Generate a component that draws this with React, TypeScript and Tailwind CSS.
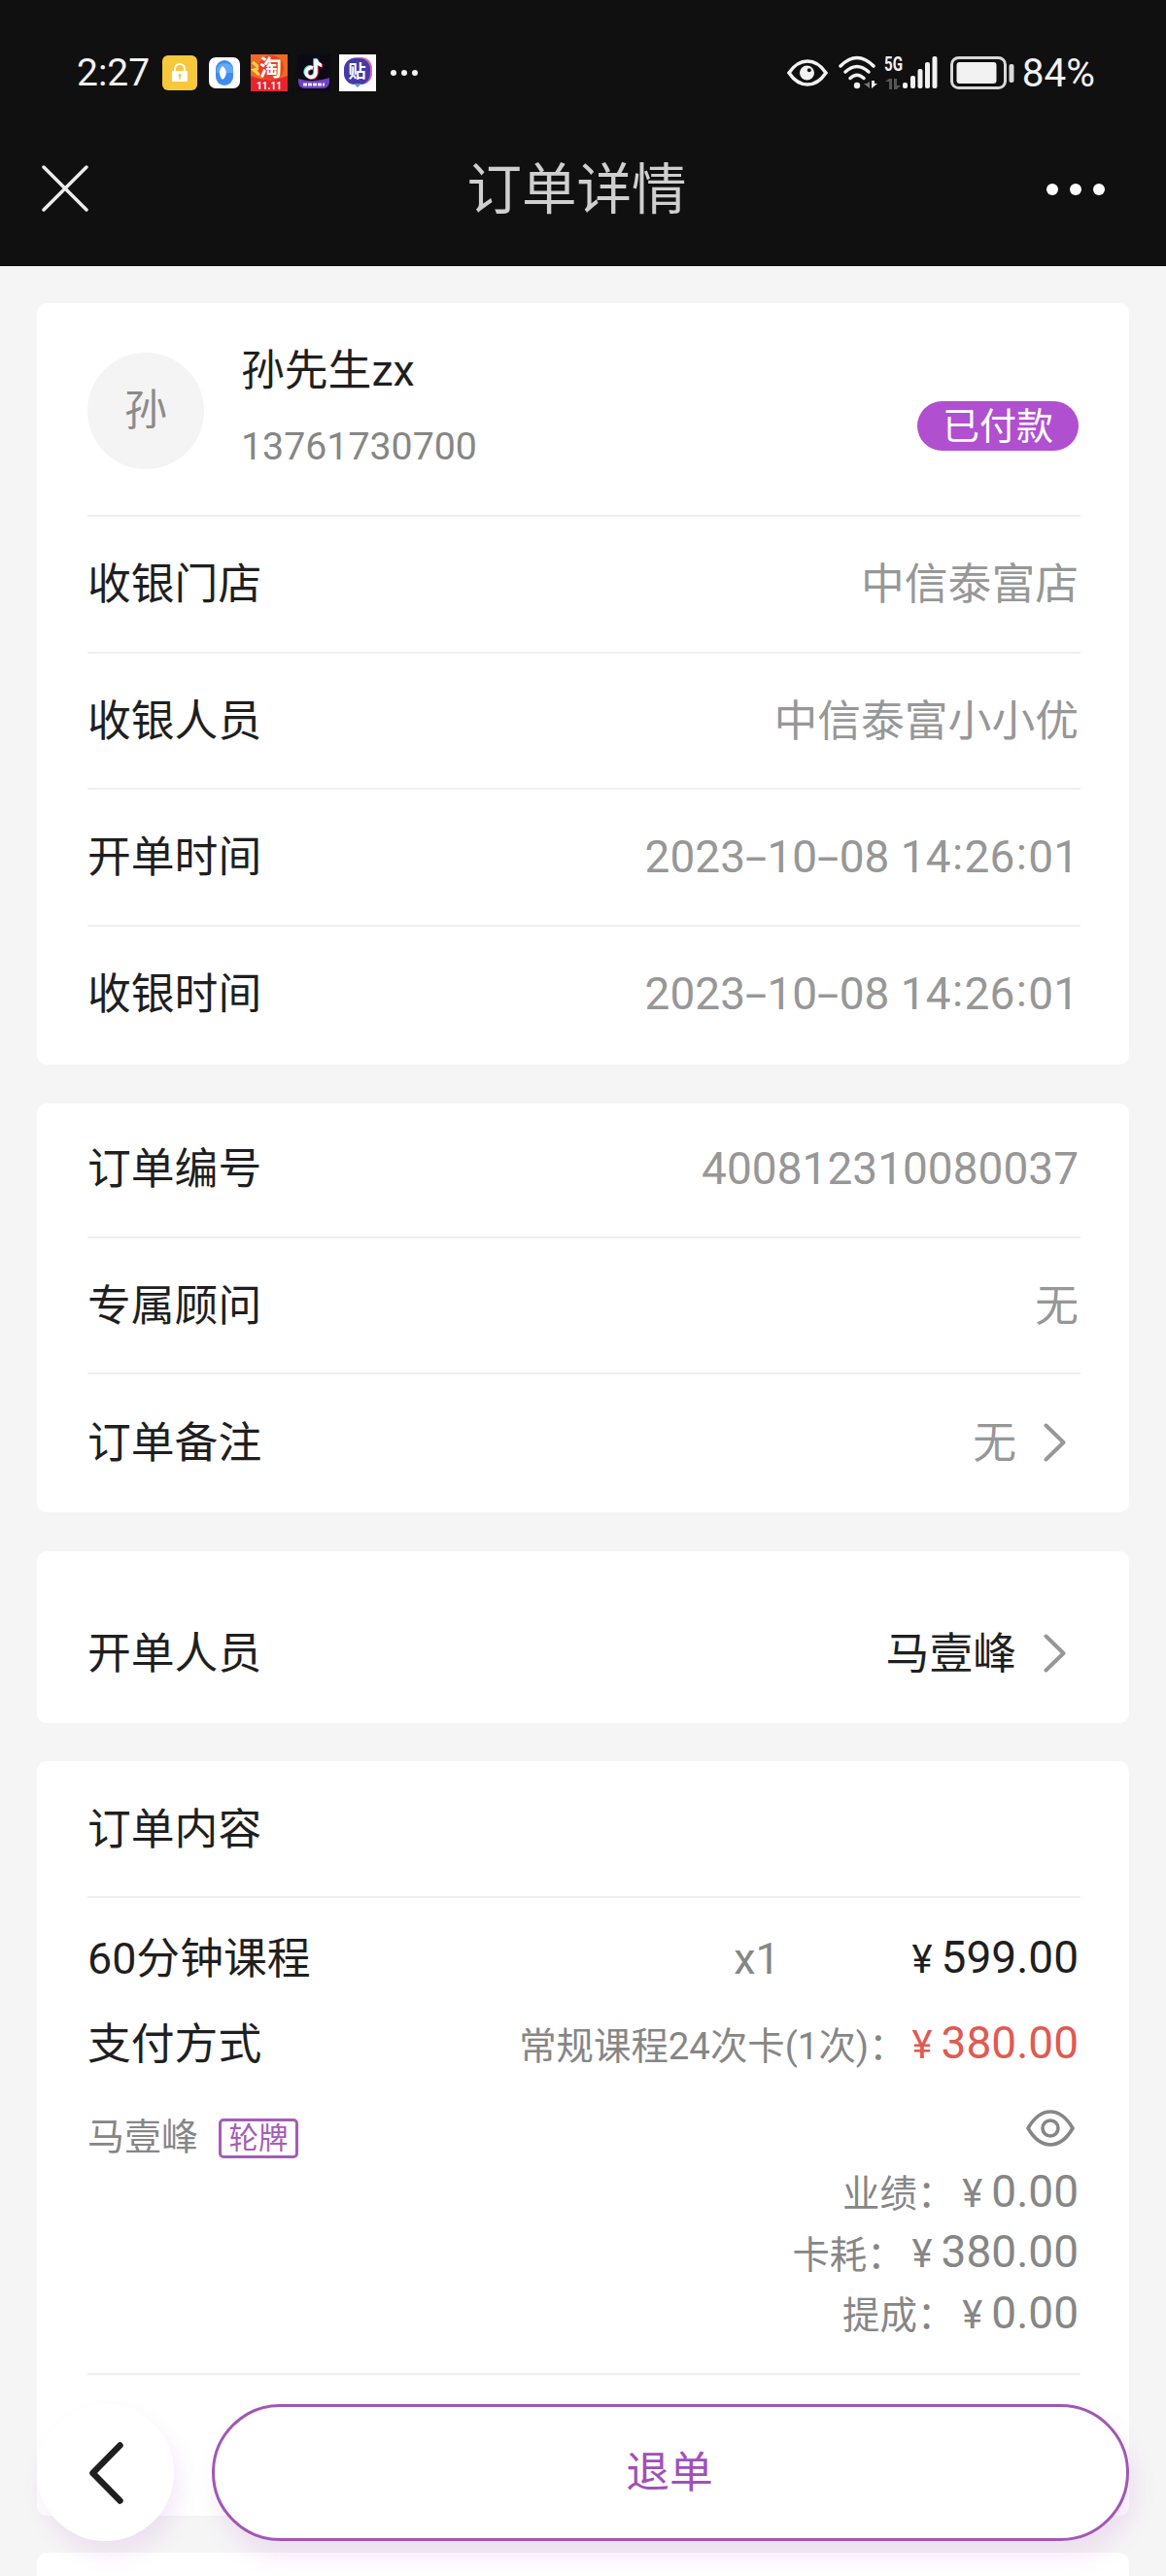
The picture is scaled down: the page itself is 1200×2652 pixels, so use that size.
import React from "react";

interface IRowProps {
  label: string;
  value: string;
  arrow?: boolean;
  dark?: boolean;
  last?: boolean;
}

function ChevronRight() {
  return (
    <svg width="24" height="40" viewBox="0 0 24 40" fill="none" className="ml-[28px] mr-[12px]">
      <path d="M2.5 2.5 L20.5 20 L2.5 37.5" stroke="#979797" strokeWidth="4" strokeLinecap="round" strokeLinejoin="round" />
    </svg>
  );
}

// digits with wide dashes and raised colons
function Digits({ value }: { value: string }) {
  return (
    <span className="whitespace-pre text-[46px] leading-[60px] text-[#979797]">
      {value.split("").map((c, i) =>
        c === "-" ? (
          <span key={i} className="inline-block w-[22.5px] scale-x-[1.75] text-center">
            -
          </span>
        ) : c === ":" ? (
          <span key={i} className="inline-block w-[14px] -translate-y-[3px] text-center">
            :
          </span>
        ) : (
          c
        )
      )}
    </span>
  );
}

function Row({ label, value, arrow, dark, last }: IRowProps) {
  const numeric = /^[\d\-: ]+$/.test(value);

  return (
    <div
      className={
        last
          ? "flex h-[139px] items-center justify-between pr-[2px]"
          : "flex h-[140.5px] items-center justify-between border-b-2 border-[#efefef] pr-[2px]"
      }
    >
      <span className="mt-[2px] text-[44.8px] leading-[60px] text-[#1f1f1f]">{label}</span>
      <div className="flex items-center">
        {numeric ? (
          <Digits value={value} />
        ) : (
          <span
            className={
              dark
                ? "mt-[2px] text-[44.8px] leading-[60px] text-[#1f1f1f]"
                : "mt-[2px] text-[44.8px] leading-[60px] text-[#979797]"
            }
          >
            {value}
          </span>
        )}
        {arrow && <ChevronRight />}
      </div>
    </div>
  );
}

function Price({ value }: { value: string }) {
  return (
    <span className="flex items-baseline leading-[60px]">
      <span className="mr-[9px] text-[40px]">¥</span>
      <span className="text-[46px]">{value}</span>
    </span>
  );
}

function StatusBar() {
  return (
    <div className="flex h-[150px] items-center justify-between pl-[79px] pr-[73px]">
      <div className="flex items-center">
        <span className="w-[88px] text-[39px] leading-[40px] text-[#f2f2f2]">2:27</span>
        <svg width="36" height="36" viewBox="0 0 36 36">
          <rect width="36" height="36" rx="6" fill="#f8c83c" />
          <path d="M13 17v-3a5 5 0 0 1 10 0v3" fill="none" stroke="#fff" strokeWidth="2" />
          <rect x="10" y="16" width="16" height="11" rx="1" fill="#fff" />
          <circle cx="18" cy="20.5" r="1.5" fill="#f8c83c" />
          <path d="M18 20v4.5" stroke="#f8c83c" strokeWidth="1.5" />
        </svg>
        <svg width="32" height="32" viewBox="0 0 32 32" className="ml-[12px]">
          <rect width="32" height="32" rx="7" fill="#fff" />
          <rect x="7" y="3" width="18" height="26" rx="9" fill="#3f8cf0" />
          <path d="M8 16V12a9 9 0 0 1 17 0v4z" fill="#66a9f8" />
          <path d="M14 9c5 4 5 10 0 14c-4-4-4-10 0-14z" fill="#fff" />
        </svg>
        <svg width="38" height="38" viewBox="0 0 38 38" className="ml-[11px]">
          <rect width="38" height="38" fill="#ee6a25" />
          <path d="M0 22Q18 30 38 22V38H0z" fill="#e5252d" />
          <path d="M2 8l7 6-6 2 6 5" fill="none" stroke="#ffd04a" strokeWidth="3" />
          <circle cx="21" cy="14" r="13" fill="#e8402a" />
          <text x="9" y="22" fontSize="23" fontWeight="700" fill="#fff">淘</text>
          <text x="19" y="35.5" fontSize="10" fontWeight="700" fill="#fff" textAnchor="middle">11.11</text>
        </svg>
        <svg width="34" height="38" viewBox="0 0 34 38" className="ml-[10px]">
          <rect width="34" height="38" fill="#0c0a14" />
          <path d="M1 25Q17 30 33 24V29Q32 35 26 35H8Q2 35 1 29z" fill="#7040c4" />
          <g fill="none" strokeWidth="3.5">
            <path d="M16 14a5 5 0 1 0 3 5V5c1 4 4 6 6 6" stroke="#2ee6e6" transform="translate(-1 -.7)" />
            <path d="M16 14a5 5 0 1 0 3 5V5c1 4 4 6 6 6" stroke="#f0305a" transform="translate(1 .7)" />
            <path d="M16 14a5 5 0 1 0 3 5V5c1 4 4 6 6 6" stroke="#fff" />
          </g>
          <path d="M6 31h22" stroke="#efe4ff" strokeWidth="3" strokeDasharray="4 1" />
        </svg>
        <svg width="38" height="38" viewBox="0 0 38 38" className="ml-[9px]">
          <rect width="38" height="38" fill="#fff" />
          <rect x="7" y="3" width="27" height="28" rx="11" fill="#d66ca8" />
          <rect x="5" y="4" width="27" height="27" rx="11" fill="#453ba8" />
          <path d="M15 30l4 4 4-4z" fill="#5f8ee8" />
          <text x="18.5" y="24" fontSize="18" fontWeight="700" fill="#fff" textAnchor="middle">贴</text>
        </svg>
        <div className="ml-[15px] flex gap-[5px]">
          <i className="size-[6px] rounded-full bg-[#f2f2f2]" />
          <i className="size-[6px] rounded-full bg-[#f2f2f2]" />
          <i className="size-[6px] rounded-full bg-[#f2f2f2]" />
        </div>
      </div>

      <div className="flex items-center">
        <svg width="42" height="28" viewBox="0 0 42 28" className="mr-[10px]">
          <path d="M2 14C8 5 14 2 21 2s13 3 19 12c-6 9-12 12-19 12S8 23 2 14z" fill="none" stroke="#f2f2f2" strokeWidth="3.5" />
          <circle cx="20.5" cy="14" r="7.5" fill="#f2f2f2" />
          <circle cx="22.8" cy="11.3" r="2" fill="#111" />
        </svg>
        <svg width="42" height="36" viewBox="0 0 42 36" className="mr-[6px]" fill="none">
          <g stroke="#f2f2f2" strokeWidth="3.5" strokeLinecap="round">
            <path d="M3 11Q20-6 37 11" />
            <path d="M8 17Q20 6 32 17" />
            <path d="M13 23.5Q20 17 27 23.5" />
          </g>
          <circle cx="20" cy="31" r="3.2" fill="#f2f2f2" />
          <path d="M33 27v7l-6-5h3" fill="#777" />
          <path d="M35 26v8l6-5h-3v-3z" fill="#f2f2f2" />
        </svg>
        <svg width="56" height="44" viewBox="0 -4 56 44" className="mr-[12px]">
          <text x="0" y="15.5" fontSize="20" fontWeight="700" fill="#f2f2f2" textLength="19" lengthAdjust="spacingAndGlyphs">5G</text>
          <path d="M1 27l4-3h3v11H5v-8z M10 24h3v7h4l-4 4h-3z" fill="#555" />
          <g fill="#f2f2f2">
            <rect x="19" y="28" width="5" height="6" rx="2" />
            <rect x="27" y="21" width="5" height="13" rx="2" />
            <rect x="34.5" y="14" width="5" height="20" rx="2" />
            <rect x="42" y="7" width="5" height="27" rx="2" />
            <rect x="49.5" y="1" width="5" height="33" rx="2" />
          </g>
        </svg>
        <svg width="66" height="36" viewBox="0 0 66 36" className="mr-[8px]">
          <rect x="1.5" y="2.5" width="55" height="31" rx="7" fill="none" stroke="#d8d8d8" strokeWidth="3" />
          <rect x="6.5" y="7" width="41" height="22" rx="3" fill="#f2f2f2" />
          <rect x="60.5" y="9" width="5" height="19" rx="2" fill="#d8d8d8" />
        </svg>
        <span className="text-[40.5px] leading-[40px] text-[#f2f2f2]">84%</span>
      </div>
    </div>
  );
}

function NavBar() {
  return (
    <div className="flex h-[124px] items-start justify-between pl-[43px] pr-[63px] pt-[4px]">
      <svg width="50" height="50" viewBox="0 0 50 50" className="mt-[16px]">
        <path d="M2 2L46 46M46 2L2 46" stroke="#ededed" strokeWidth="3.5" strokeLinecap="round" />
      </svg>
      <span className="ml-[17px] mt-[2px] text-[56.5px] leading-[80px] text-[#cfcfcf]">订单详情</span>
      <div className="mt-[35px] flex gap-[12px]">
        <i className="size-[12px] rounded-full bg-white" />
        <i className="size-[12px] rounded-full bg-white" />
        <i className="size-[12px] rounded-full bg-white" />
      </div>
    </div>
  );
}

function StatLine({ label, value }: { label: string; value: string }) {
  return (
    <div className="flex h-[62.5px] items-center justify-end text-[#868686]">
      <span className="mt-[4px] text-[38.4px] leading-[60px]">{label}：</span>
      <span className="pl-[8px]">
        <Price value={value} />
      </span>
    </div>
  );
}

function App() {
  return (
    <div className="relative h-[2652px] w-[1200px] overflow-hidden bg-[#f5f5f5] font-[Roboto,'Noto_Sans_CJK_SC',sans-serif]">
      <header className="h-[274px] bg-[#101010]">
        <StatusBar />
        <NavBar />
      </header>

      <main className="flex flex-col px-[38px] pt-[38px]">
        <section className="h-[784px] rounded-[10px] bg-white pl-[52px] pr-[50px]">
          <div className="flex h-[220px] border-b-2 border-[#efefef]">
            <div className="mt-[51px] flex size-[120px] items-center justify-center rounded-full bg-[#f4f4f4] text-[44px] leading-[60px] text-[#8b8b8b]">
              孙
            </div>
            <div className="ml-[38px] mt-[40px] flex flex-col">
              <span className="text-[44.8px] leading-[60px] text-[#1f1f1f]">孙先生zx</span>
              <span className="mt-[18px] text-[39.3px] leading-[60px] text-[#868686]">13761730700</span>
            </div>
            <div className="ml-auto mr-[2px] mt-[101px] flex h-[51px] w-[166px] items-center justify-center rounded-full bg-[#b04fcf] text-[38px] leading-[50px] text-white">
              已付款
            </div>
          </div>
          <Row label="收银门店" value="中信泰富店" />
          <Row label="收银人员" value="中信泰富小小优" />
          <Row label="开单时间" value="2023-10-08 14:26:01" />
          <Row label="收银时间" value="2023-10-08 14:26:01" last />
        </section>

        <section className="mt-[40px] h-[421px] rounded-[10px] bg-white pl-[52px] pr-[50px]">
          <div className="-mt-[2px]">
            <Row label="订单编号" value="400812310080037" />
            <Row label="专属顾问" value="无" />
            <Row label="订单备注" value="无" arrow last />
          </div>
        </section>

        <section className="mt-[40px] h-[177px] rounded-[10px] bg-white pl-[52px] pr-[50px] pt-[35px]">
          <Row label="开单人员" value="马壹峰" arrow dark last />
        </section>

        <section className="mt-[39px] h-[777px] rounded-[10px] bg-white pl-[52px] pr-[50px]">
          <div className="flex h-[141px] items-center border-b-2 border-[#efefef] pt-[2px] text-[44.8px] leading-[60px] text-[#1f1f1f]">
            订单内容
          </div>
          <div className="flex h-[88px] items-center pr-[2px] pt-[37px] text-[#1f1f1f]">
            <span className="text-[44.8px] leading-[60px]">60分钟课程</span>
            <span className="ml-auto mr-[136px] text-[44.8px] leading-[60px] text-[#868686]">x1</span>
            <Price value="599.00" />
          </div>
          <div className="flex h-[88px] items-center pr-[2px] pt-[37px]">
            <span className="text-[44.8px] leading-[60px] text-[#1f1f1f]">支付方式</span>
            <span className="ml-auto mr-[6px] mt-[4px] text-[38.4px] leading-[60px] text-[#868686]">
              常规课程24次卡(1次)：
            </span>
            <span className="text-[#e05a52]">
              <Price value="380.00" />
            </span>
          </div>
          <div className="flex h-[95px] items-start pt-[30px]">
            <span className="mt-[10px] text-[38px] leading-[60px] text-[#868686]">马壹峰</span>
            <span className="ml-[21px] mt-[21px] flex h-[41px] w-[82px] items-center justify-center rounded-[5px] border-[3px] border-[#a55cb8] text-[30.5px] leading-[36px] text-[#a55cb8]">
              轮牌
            </span>
            <svg width="50" height="38" viewBox="0 0 50 38" fill="none" className="ml-auto mr-[6px] mt-[12px]" stroke="#868686" strokeWidth="3.6">
              <path d="M2 19C9 7 16 2 25 2s16 5 23 17c-7 12-14 17-23 17S9 31 2 19z" strokeLinejoin="round" />
              <circle cx="25" cy="19" r="8" />
            </svg>
          </div>
          <div className="h-[220px] border-b-2 border-[#efefef] pr-[2px] pt-[1px]">
            <StatLine label="业绩" value="0.00" />
            <StatLine label="卡耗" value="380.00" />
            <StatLine label="提成" value="0.00" />
          </div>
        </section>

        <section className="mt-[38px] h-[100px] rounded-[10px] bg-white" />
      </main>

      {/* floating action bar */}
      <div className="absolute bottom-[36px] left-[38px] flex h-[141px] w-[1124px] items-center gap-[39px]">
        <button className="flex size-[141px] items-center justify-center rounded-full bg-white pl-[2px] shadow-[6px_14px_22px_rgba(176,79,207,0.12)]">
          <svg width="35" height="64" viewBox="0 0 35 64" fill="none">
            <path d="M31.5 3.5L3.5 32L31.5 60.5" stroke="#1f1f1f" strokeWidth="6.5" strokeLinecap="round" strokeLinejoin="round" />
          </svg>
        </button>
        <button className="h-[141px] flex-1 rounded-full border-[3px] border-[#a157b5] bg-white pr-[2px] text-[44.8px] leading-[60px] text-[#a24fb9] shadow-[6px_16px_24px_rgba(176,79,207,0.13)]">
          退单
        </button>
      </div>
    </div>
  );
}

export default App;
